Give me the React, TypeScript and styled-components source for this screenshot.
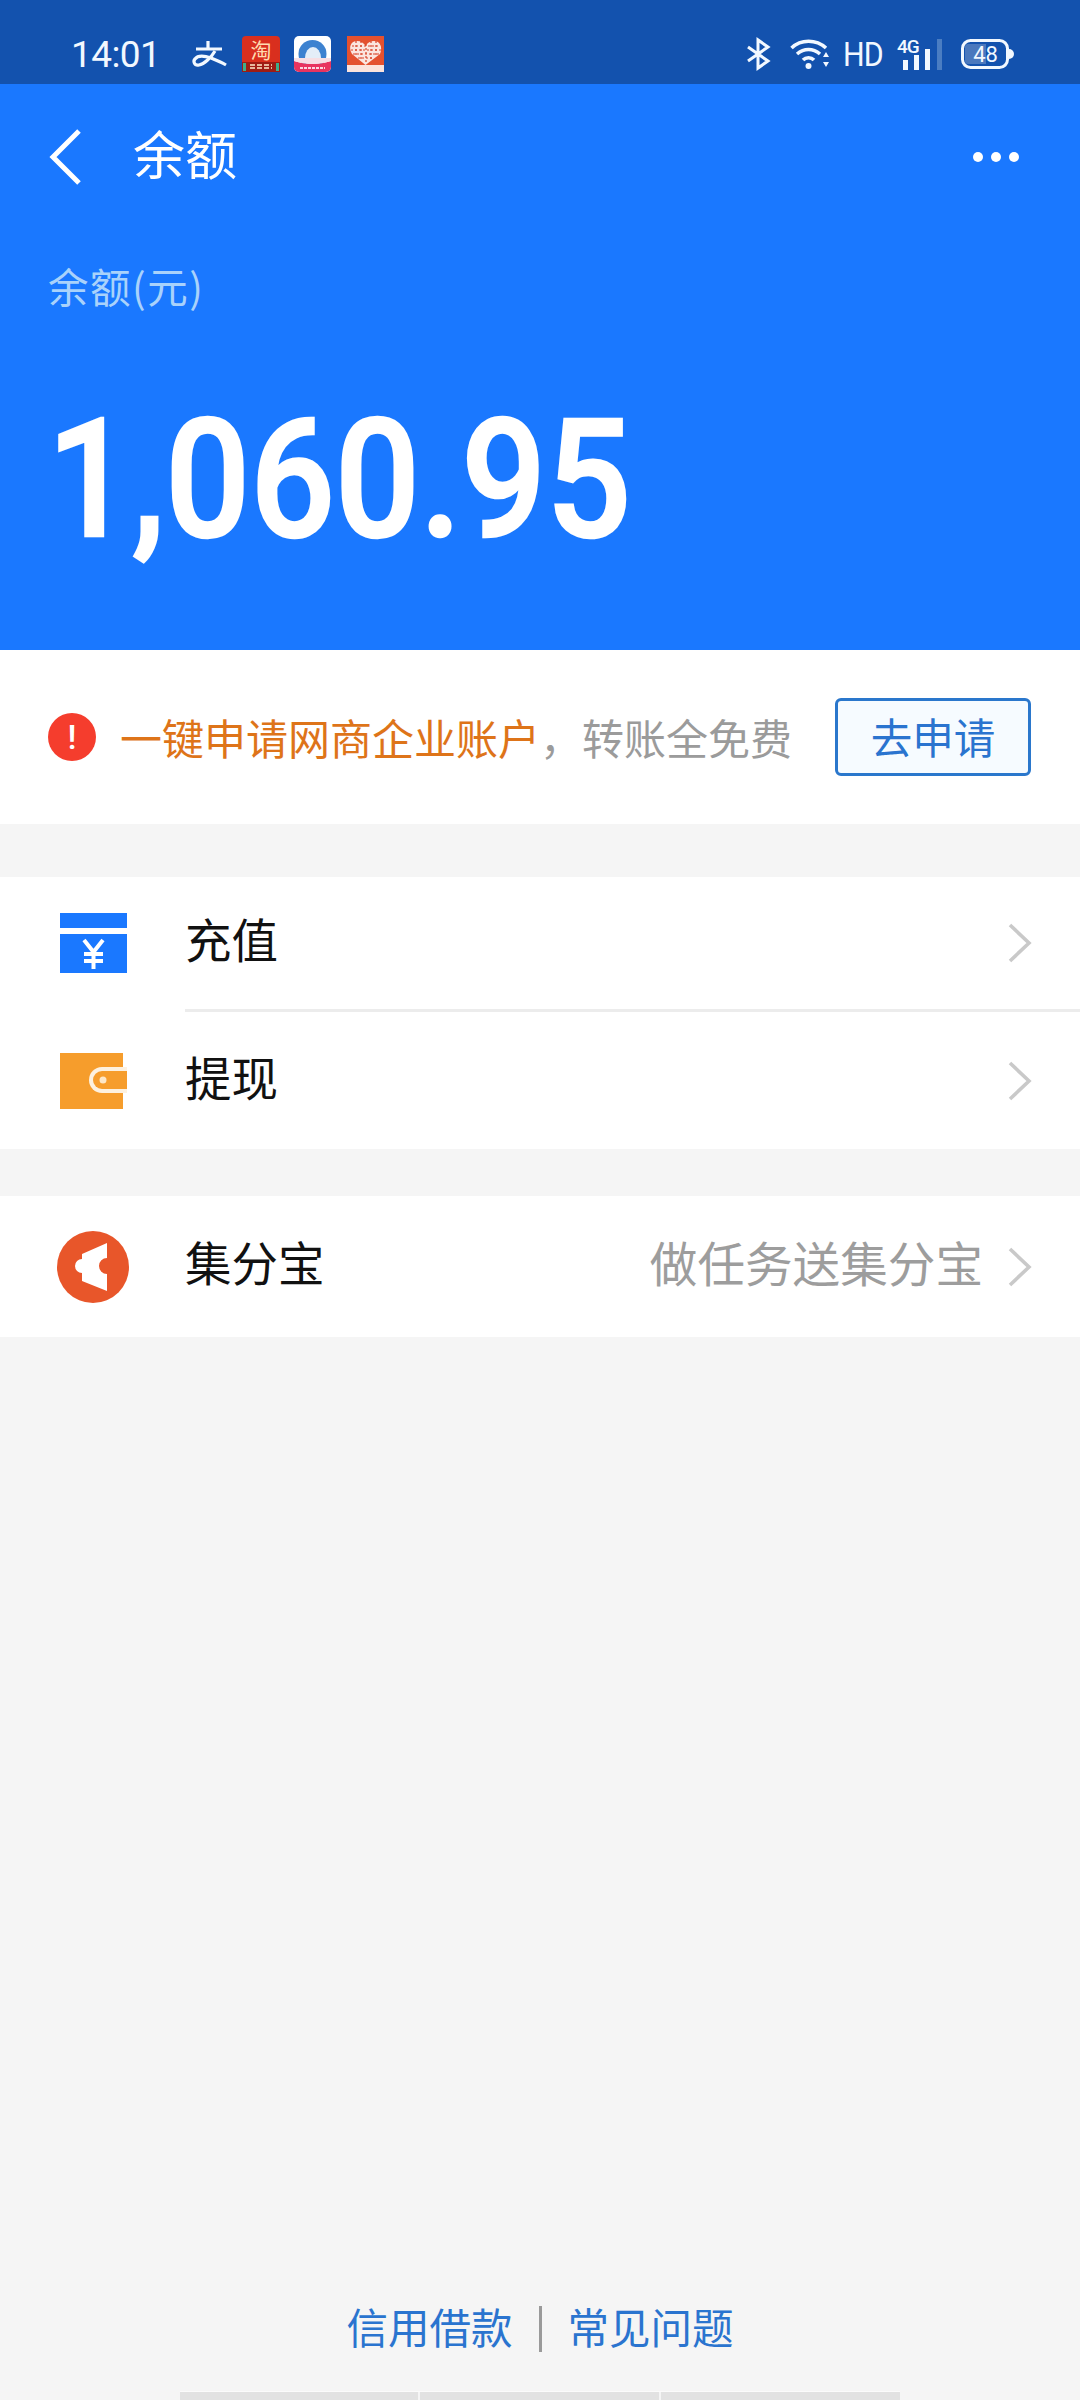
import React from "react";
import styled, { createGlobalStyle } from "styled-components";

const CJK = `"Noto Sans CJK SC", "Noto Sans", sans-serif`;

const Global = createGlobalStyle`
  html, body { margin: 0; padding: 0; background: #f5f5f5; }
  * { box-sizing: border-box; }
  body { font-family: ${CJK}; }
`;

const Page = styled.div`
  width: 1080px;
  height: 2400px;
  display: flex;
  flex-direction: column;
  background: #f5f5f5;
  overflow: hidden;
`;

const StatusBar = styled.div`
  height: 84px;
  flex: none;
  background: #1352ae;
  display: flex;
  align-items: center;
  padding: 24px 68px 0 71px;
  color: #f2f8ff;
`;

const Time = styled.span`
  font: 400 37px/1 Roboto, sans-serif;
  letter-spacing: -0.6px;
  margin-right: 33px;
`;

const NotifyIcons = styled.div`
  display: flex;
  align-items: center;
  flex: 1;
`;

const StatusGlyph = styled.svg<{ $gap?: number }>`
  display: block;
  flex: none;
  overflow: visible;
  margin-right: ${(p) => p.$gap ?? 0}px;
`;

const HdLabel = styled.span`
  font: 400 33px/1 Roboto, sans-serif;
  letter-spacing: -1px;
  margin: 0 18px 0 12px;
  transform: scaleX(0.92);
  transform-origin: left center;
  width: 36px;
`;

const Hero = styled.section`
  height: 566px;
  flex: none;
  background: #1a78ff;
  display: flex;
  flex-direction: column;
`;

const NavRow = styled.div`
  height: 102px;
  flex: none;
  padding: 44px 61px 0 47px;
  display: flex;
  align-items: center;
`;

const NavTitle = styled.h1`
  margin: 0 0 0 50px;
  padding-bottom: 8px;
  flex: 1;
  font: 400 52px/1 ${CJK};
  color: #fff;
`;

const Dots = styled.div`
  display: flex;
  gap: 8px;
`;

const Dot = styled.i`
  display: block;
  width: 10px;
  height: 10px;
  border-radius: 50%;
  background: #fff;
`;

const BalanceLabel = styled.div`
  margin: 71px 0 0 48px;
  font: 400 40.5px/58px ${CJK};
  letter-spacing: 1.5px;
  color: #a9d2fb;
`;

const Amount = styled.div`
  margin: 79px 0 0 47px;
  font: 500 165px/171px Roboto, sans-serif;
  -webkit-text-stroke: 2.5px #fff;
  color: #fff;
  white-space: nowrap;
  transform: scaleX(0.905);
  transform-origin: left center;
`;

const Banner = styled.section`
  height: 174px;
  flex: none;
  background: #fff;
  padding: 0 49px 0 48px;
  display: flex;
  align-items: center;
  margin-bottom: 53px;
`;

const AlertDot = styled.span`
  width: 48px;
  height: 48px;
  flex: none;
  border-radius: 50%;
  background: #f53d2d;
  color: #fff;
  font: 500 34px/48px Roboto, sans-serif;
  text-align: center;
  margin-right: 24px;
`;

const BannerText = styled.div`
  flex: 1;
  font: 400 42px/1 ${CJK};
  white-space: nowrap;
  color: #9b9b9b;
`;

const Orange = styled.span`
  color: #de7419;
`;

const ApplyButton = styled.button`
  width: 196px;
  height: 78px;
  flex: none;
  padding: 0;
  border: 3px solid #2a77cc;
  border-radius: 6px;
  background: #f6fbff;
  color: #2a74cf;
  font: 400 41.5px/1 ${CJK};
`;

const Group = styled.section<{ $gap?: number }>`
  flex: none;
  background: #fff;
  margin-bottom: ${(p) => p.$gap ?? 0}px;
`;

const Row = styled.div<{ $h: number }>`
  height: ${(p) => p.$h}px;
  display: flex;
  align-items: center;
  padding-right: 48px;
`;

const IconCell = styled.div<{ $pad?: number }>`
  width: 185px;
  flex: none;
  padding-left: ${(p) => p.$pad ?? 60}px;
  display: flex;
  align-items: center;
`;

const RowBody = styled.div`
  flex: 1;
  align-self: stretch;
  display: flex;
  align-items: center;
`;

const RowTitle = styled.span<{ $lift: number }>`
  flex: 1;
  padding-bottom: ${(p) => p.$lift}px;
  font: 400 46.5px/1 ${CJK};
  color: #111;
`;

const RowHint = styled.span<{ $lift: number }>`
  padding-bottom: ${(p) => p.$lift}px;
  font: 400 47.6px/1 ${CJK};
  color: #9d9d9d;
  margin-right: 25px;
`;

const Divider = styled.div`
  height: 3px;
  margin-left: 185px;
  background: #ececec;
`;

const Footer = styled.footer`
  margin-top: auto;
  display: flex;
  flex-direction: column;
  align-items: center;
`;

const LinkRow = styled.div`
  display: flex;
  align-items: center;
  height: 46px;
  margin-bottom: 39px;
`;

const FooterLink = styled.a`
  padding-bottom: 6px;
  font: 400 41.5px/46px ${CJK};
  color: #2a74cf;
`;

const LinkBar = styled.span`
  width: 3px;
  height: 46px;
  background: #9a9a9a;
  margin: 0 26px;
`;

const BottomStrip = styled.div`
  width: 720px;
  height: 9px;
  display: flex;
  gap: 2px;
  margin-left: -1px;
  border-top: 1px solid #fbfbfb;
`;

const StripPart = styled.i`
  flex: 1;
  background: #e2e2e2;
`;

const Chevron = () => (
  <svg width="24" height="40" viewBox="0 0 24 40" fill="none">
    <path d="M2 2 L21 20 L2 38" stroke="#c9c9c9" strokeWidth="3.6" />
  </svg>
);

export default function App() {
  return (
    <Page>
      <Global />
      <StatusBar>
        <Time>14:01</Time>
        <NotifyIcons>
          <StatusGlyph $gap={15} width="34" height="26" viewBox="0 0 34 26" fill="none">
            <path d="M3 8 H29 M15 0 V8" stroke="#f2f8ff" strokeWidth="3.2" />
            <path d="M22 10 C18 17 11 23 6 24 C1 25 0 20 2 18 C5 14 12 15 18 17 C23 19 28 21 33 24" stroke="#f2f8ff" strokeWidth="3.2" />
          </StatusGlyph>
          <StatusGlyph $gap={14} width="38" height="36" viewBox="0 0 38 36">
            <rect width="38" height="36" rx="4" fill="#d92f1e" />
            <rect y="26" width="38" height="10" fill="#9f1c14" />
            <text x="19" y="22" textAnchor="middle" fontSize="21" fill="#ffdcb0" fontFamily={CJK}>淘</text>
            <rect x="1" y="27" width="3" height="8" fill="#3fae8a" />
            <rect x="34" y="27" width="3" height="8" fill="#3fae8a" />
            <path d="M8 29 H30 M8 32 H30" stroke="#ffe9c9" strokeWidth="1.4" strokeDasharray="5 2" />
          </StatusGlyph>
          <StatusGlyph $gap={16} width="37" height="36" viewBox="0 0 37 36">
            <rect width="37" height="36" rx="5" fill="#fff" />
            <circle cx="18.5" cy="18" r="14" fill="#3d82d0" />
            <ellipse cx="19" cy="22" rx="8" ry="11" fill="#e4eef8" />
            <path d="M0 25 C12 29 25 29 37 25 V31 a5 5 0 0 1 -5 5 H5 a5 5 0 0 1 -5 -5 Z" fill="#e8345f" />
            <path d="M0 22 H37 V25 C25 29 12 29 0 25 Z" fill="#f7dfe4" />
            <path d="M6 32 H31" stroke="#fbd6df" strokeWidth="2" strokeDasharray="3 1" />
          </StatusGlyph>
          <StatusGlyph width="37" height="36" viewBox="0 0 37 36">
            <rect width="37" height="36" fill="#e4512f" />
            <rect y="29" width="37" height="7" fill="#fbe3dc" />
            <path d="M18.5 29 L5 18 C1 11 4 5 10 5 C14 5 17 7 18.5 10 C20 7 23 5 27 5 C33 5 36 11 33 18 Z" fill="#fbe6df" />
            <path d="M5 10 H33 M4 14 H34 M6 18 H32 M11 22 H26 M9 5 V20 M14 5 V24 M19 8 V28 M24 5 V24 M29 5 V20" stroke="#d8442a" strokeWidth="1.2" strokeDasharray="2 2" />
          </StatusGlyph>
        </NotifyIcons>
        <StatusGlyph $gap={20} width="23" height="30" viewBox="0 0 23 30" fill="none">
          <path d="M1 8 L21 22 L11 29 V1 L21 8 L1 22" stroke="#f2f8ff" strokeWidth="3" />
        </StatusGlyph>
        <StatusGlyph width="41" height="30" viewBox="0 0 41 30" fill="none">
          <path d="M1.5 9 C11 0 26 0 36 9 M7 15 C14 9 23 9 30 15 M13 21 C16 18 21 18 24 21" stroke="#f2f8ff" strokeWidth="3.6" />
          <circle cx="18.5" cy="27" r="3" fill="#f2f8ff" />
          <path d="M36 13 L33 18 H39 Z M36 28 L33 23 H39 Z" fill="#f2f8ff" />
        </StatusGlyph>
        <HdLabel>HD</HdLabel>
        <StatusGlyph $gap={18} width="46" height="32" viewBox="0 0 46 32">
          <text x="0" y="15" fontSize="19" fontWeight="500" fill="#f2f8ff" fontFamily="Roboto, sans-serif" letterSpacing="-1">4G</text>
          <rect x="6" y="22" width="5" height="10" fill="#f2f8ff" />
          <rect x="17" y="17" width="5" height="15" fill="#f2f8ff" />
          <rect x="28" y="11" width="5" height="21" fill="#f2f8ff" />
          <rect x="40" y="1" width="5" height="31" fill="#4a7dc2" />
        </StatusGlyph>
        <StatusGlyph width="51" height="30" viewBox="0 0 51 30">
          <rect x="1.5" y="1.5" width="45" height="27" rx="8" fill="none" stroke="#f2f8ff" strokeWidth="3" />
          <path d="M7 5 H25 V25 H7 a3 3 0 0 1 -3 -3 V8 a3 3 0 0 1 3 -3 Z" fill="#4a78bd" />
          <path d="M48 10 a5 5 0 0 1 0 10 Z" fill="#f2f8ff" />
          <text x="24.5" y="23" textAnchor="middle" fontSize="22" fill="#f2f8ff" fontFamily="Roboto, sans-serif">48</text>
        </StatusGlyph>
      </StatusBar>

      <Hero>
        <NavRow>
          <svg width="36" height="56" viewBox="0 0 36 56" fill="none">
            <path d="M32 2 L6 28 L32 54" stroke="#fff" strokeWidth="5" />
          </svg>
          <NavTitle>余额</NavTitle>
          <Dots>
            <Dot />
            <Dot />
            <Dot />
          </Dots>
        </NavRow>
        <BalanceLabel>余额(元)</BalanceLabel>
        <Amount>1,060.95</Amount>
      </Hero>

      <Banner>
        <AlertDot>!</AlertDot>
        <BannerText>
          <Orange>一键申请网商企业账户</Orange>，转账全免费
        </BannerText>
        <ApplyButton>去申请</ApplyButton>
      </Banner>

      <Group $gap={47}>
        <Row $h={132}>
          <IconCell>
            <svg width="67" height="60" viewBox="0 0 67 60">
              <rect x="0" y="0" width="67" height="15" fill="#1a78ff" />
              <rect x="0" y="21" width="67" height="39" fill="#1a78ff" />
              <path d="M24 27 L33.5 39 L43 27 M24 41 H43 M24 48 H43 M33.5 39 V56" stroke="#fff" strokeWidth="4" fill="none" />
            </svg>
          </IconCell>
          <RowBody>
            <RowTitle $lift={10}>充值</RowTitle>
            <Chevron />
          </RowBody>
        </Row>
        <Divider />
        <Row $h={137}>
          <IconCell>
            <svg width="67" height="56" viewBox="0 0 67 56">
              <rect width="63" height="56" fill="#f69d2c" />
              <path d="M67 14 H42 a13 13 0 0 0 0 26 H67 Z" fill="#fdf1df" />
              <path d="M67 18 H42 a9 9 0 0 0 0 18 H67 Z" fill="#f69d2c" />
              <circle cx="43" cy="27" r="3.5" fill="#fde7c8" />
            </svg>
          </IconCell>
          <RowBody>
            <RowTitle $lift={8}>提现</RowTitle>
            <Chevron />
          </RowBody>
        </Row>
      </Group>

      <Group>
        <Row $h={141}>
          <IconCell $pad={57}>
            <svg width="72" height="72" viewBox="0 0 72 72">
              <circle cx="36" cy="36" r="36" fill="#e8562a" />
              <path d="M50 12 L25 23 L25 28 A7 7 0 0 0 25 42 L25 50 L50 60 V43 A8 8 0 0 1 50 27 Z" fill="#fff" />
            </svg>
          </IconCell>
          <RowBody>
            <RowTitle $lift={11}>集分宝</RowTitle>
            <RowHint $lift={9}>做任务送集分宝</RowHint>
            <Chevron />
          </RowBody>
        </Row>
      </Group>

      <Footer>
        <LinkRow>
          <FooterLink>信用借款</FooterLink>
          <LinkBar />
          <FooterLink>常见问题</FooterLink>
        </LinkRow>
        <BottomStrip>
          <StripPart />
          <StripPart />
          <StripPart />
        </BottomStrip>
      </Footer>
    </Page>
  );
}
